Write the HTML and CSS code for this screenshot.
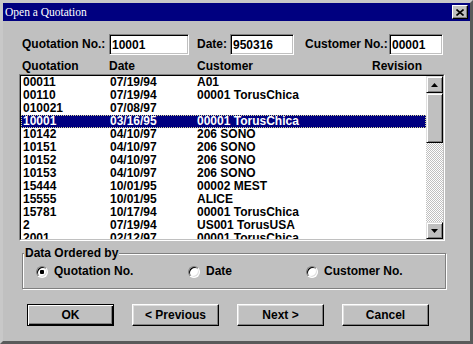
FILE: index.html
```html
<!DOCTYPE html>
<html lang="en">
  <head>
    <meta charset="UTF-8" />
    <title>Open a Quotation</title>
    <link rel="stylesheet" href="styles.css">
  </head>
  <body>
    <div class="window">
      <div class="titlebar">
        <span class="title">Open a Quotation</span>
        <button class="close-btn">
          <svg width="8" height="7" viewBox="0 0 8 7">
            <path d="M0.5 0.5 L7.5 6.5 M7.5 0.5 L0.5 6.5" stroke="#000" stroke-width="1.6" fill="none" />
          </svg>
        </button>
      </div>

      <div class="content">
        <div class="fields">
          <label class="field-label lbl-quote">Quotation No.:</label>
          <input class="field in-quote" type="text" value="10001">
          <label class="field-label lbl-date">Date:</label>
          <input class="field in-date" type="text" value="950316">
          <label class="field-label lbl-cust">Customer No.:</label>
          <input class="field in-cust" type="text" value="00001">
        </div>

        <div class="list-header">
          <span class="col-quote">Quotation</span>
          <span class="col-date">Date</span>
          <span class="col-cust">Customer</span>
          <span class="col-rev">Revision</span>
        </div>

        <div class="listbox">
          <div class="listbox-inner">
            <div class="rows">
              <div class="row"><span class="col-quote">00011</span><span class="col-date">07/19/94</span><span class="col-cust">A01</span></div>
              <div class="row"><span class="col-quote">00110</span><span class="col-date">07/19/94</span><span class="col-cust">00001 TorusChica</span></div>
              <div class="row"><span class="col-quote">010021</span><span class="col-date">07/08/97</span><span class="col-cust"></span></div>
              <div class="row selected"><span class="col-quote">10001</span><span class="col-date">03/16/95</span><span class="col-cust">00001 TorusChica</span></div>
              <div class="row"><span class="col-quote">10142</span><span class="col-date">04/10/97</span><span class="col-cust">206 SONO</span></div>
              <div class="row"><span class="col-quote">10151</span><span class="col-date">04/10/97</span><span class="col-cust">206 SONO</span></div>
              <div class="row"><span class="col-quote">10152</span><span class="col-date">04/10/97</span><span class="col-cust">206 SONO</span></div>
              <div class="row"><span class="col-quote">10153</span><span class="col-date">04/10/97</span><span class="col-cust">206 SONO</span></div>
              <div class="row"><span class="col-quote">15444</span><span class="col-date">10/01/95</span><span class="col-cust">00002 MEST</span></div>
              <div class="row"><span class="col-quote">15555</span><span class="col-date">10/01/95</span><span class="col-cust">ALICE</span></div>
              <div class="row"><span class="col-quote">15781</span><span class="col-date">10/17/94</span><span class="col-cust">00001 TorusChica</span></div>
              <div class="row"><span class="col-quote">2</span><span class="col-date">07/19/94</span><span class="col-cust">US001 TorusUSA</span></div>
              <div class="row"><span class="col-quote">2001</span><span class="col-date">02/12/97</span><span class="col-cust">00001 TorusChica</span></div>
            </div>
            <div class="scrollbar">
              <div class="sb-btn">
                <svg width="7" height="4" viewBox="0 0 7 4"><path d="M3.5 0 L7 4 L0 4 Z" fill="#000" /></svg>
              </div>
              <div class="sb-thumb"></div>
              <div class="sb-track"></div>
              <div class="sb-btn">
                <svg width="7" height="4" viewBox="0 0 7 4"><path d="M0 0 L7 0 L3.5 4 Z" fill="#000" /></svg>
              </div>
            </div>
          </div>
        </div>

        <fieldset class="order-group">
          <legend>Data Ordered by</legend>
          <div class="radios">
            <label class="radio r-quote"><span class="radio-mark checked"></span>Quotation No.</label>
            <label class="radio r-date"><span class="radio-mark"></span>Date</label>
            <label class="radio r-cust"><span class="radio-mark"></span>Customer No.</label>
          </div>
        </fieldset>

        <div class="buttons">
          <button class="btn default">OK</button>
          <button class="btn">&lt; Previous</button>
          <button class="btn">Next &gt;</button>
          <button class="btn">Cancel</button>
        </div>
      </div>
    </div>
  </body>
</html>
```

FILE: styles.css
```css
body {
  margin: 0;
  background: #c0c0c0;
  font-family: "Liberation Sans", Arial, sans-serif;
  font-size: 12px;
  font-weight: bold;
  color: #000;
}

.window {
  width: 473px;
  height: 344px;
  box-sizing: border-box;
  border: 3px solid #b4b4b4;
  border-color: #c8c8c8 #5a5a5a #5a5a5a #c8c8c8;
  background: #c0c0c0;
}

.titlebar {
  height: 18px;
  background: #000080;
  display: flex;
  align-items: center;
  justify-content: space-between;
  padding-left: 2px;
}

.title {
  font-family: "Liberation Serif", "Times New Roman", serif;
  font-weight: normal;
  font-size: 11.5px;
  line-height: 18px;
  color: #fff;
}

.close-btn {
  width: 16px;
  height: 14px;
  margin-right: 2px;
  padding: 0;
  display: flex;
  align-items: center;
  justify-content: center;
  background: #c0c0c0;
  border: 1px solid;
  border-color: #fff #000 #000 #fff;
  box-shadow: inset -1px -1px 0 #808080;
}

/* top fields */
.fields {
  display: flex;
  align-items: center;
  height: 21px;
  margin: 13px 0 0 19px;
}

.field-label {
  line-height: 13px;
}

.lbl-quote { width: 87px; }
.lbl-date { width: 33px; margin-left: 8px; }
.lbl-cust { width: 84px; margin-left: 11px; }

.field {
  height: 21px;
  box-sizing: border-box;
  margin: 0;
  padding: 0 0 0 2px;
  border: 1px solid;
  border-color: #808080 #fff #fff #808080;
  box-shadow: inset 1px 1px 0 #000, inset -1px -1px 0 #c0c0c0;
  background: #fff;
  font-family: "Liberation Sans", Arial, sans-serif;
  font-size: 12px;
  font-weight: bold;
  color: #000;
  outline: none;
}

.in-quote { width: 80px; }
.in-date { width: 64px; }
.in-cust { width: 54px; }

/* list */
.list-header {
  display: flex;
  height: 13px;
  line-height: 13px;
  margin: 5px 0 0 19px;
}

.col-quote { width: 87px; flex-shrink: 0; }
.col-date { width: 88px; flex-shrink: 0; }
.col-cust { width: 175px; flex-shrink: 0; white-space: nowrap; }

.listbox {
  width: 426px;
  height: 167px;
  box-sizing: border-box;
  margin: 1px 0 0 16px;
  border: 1px solid;
  border-color: #808080 #fff #fff #808080;
}

.listbox-inner {
  height: 100%;
  box-sizing: border-box;
  border: 1px solid;
  border-color: #000 #c0c0c0 #c0c0c0 #000;
  display: flex;
  background: #fff;
}

.rows {
  flex: 1;
  overflow: hidden;
}

.row {
  display: flex;
  height: 13px;
  line-height: 13px;
  padding-left: 2px;
}

.row .col-date { width: 87px; }

.row.selected {
  background: #000080;
  color: #fff;
  outline: 1px dotted #d8d890;
  outline-offset: -1px;
}

.scrollbar {
  width: 17px;
  display: flex;
  flex-direction: column;
}

.sb-btn,
.sb-thumb {
  box-sizing: border-box;
  background: #c0c0c0;
  border: 1px solid;
  border-color: #dfdfdf #000 #000 #dfdfdf;
  box-shadow: inset 1px 1px 0 #fff, inset -1px -1px 0 #808080;
}

.sb-btn {
  height: 17px;
  display: flex;
  align-items: center;
  justify-content: center;
}

.sb-thumb {
  height: 50px;
}

.sb-track {
  flex: 1;
  background: repeating-conic-gradient(#c0c0c0 0 25%, #fff 0 50%) 0 0 / 2px 2px;
}

/* order group */
.order-group {
  margin: 6px 24px 0 19px;
  padding: 5px 0 10px 1px;
  border: 1px solid #808080;
  box-shadow: inset 1px 1px 0 #fff, 1px 1px 0 #fff;
  min-width: 0;
}

.order-group legend {
  padding: 0 1px;
  line-height: 13px;
  background: #c0c0c0;
}

.radios {
  display: flex;
  height: 13px;
  line-height: 13px;
  margin-left: 12px;
}

.radio {
  display: flex;
  align-items: center;
  flex-shrink: 0;
}

.r-quote { width: 152px; }
.r-date { width: 118px; }

.radio-mark {
  flex-shrink: 0;
  width: 12px;
  height: 12px;
  box-sizing: border-box;
  margin-right: 6px;
  border-radius: 50%;
  border: 1px solid;
  border-color: #808080 #fff #fff #808080;
  box-shadow: inset 1px 1px 0 #000, inset -1px -1px 0 #dfdfdf;
  background: #fff;
}

.radio-mark.checked {
  background: radial-gradient(circle, #000 0 2px, #fff 2.5px);
}

/* buttons */
.buttons {
  display: flex;
  gap: 18px;
  margin: 15px 0 0 24px;
}

.btn {
  width: 87px;
  height: 22px;
  padding: 0;
  background: #c0c0c0;
  border: 1px solid;
  border-color: #fff #000 #000 #fff;
  box-shadow: inset -1px -1px 0 #808080, inset 1px 1px 0 #dfdfdf;
  font-family: "Liberation Sans", Arial, sans-serif;
  font-size: 12px;
  font-weight: bold;
  color: #000;
}

.btn.default {
  border-color: #000;
  box-shadow: inset 1px 1px 0 #fff, inset -1px -1px 0 #000, inset -2px -2px 0 #808080;
}
```
